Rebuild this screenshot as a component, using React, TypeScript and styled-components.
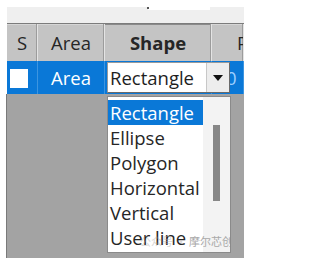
import React from "react";
import styled, { createGlobalStyle } from "styled-components";

const Global = createGlobalStyle`
  html, body { margin: 0; padding: 0; background: #ffffff; }
  body { font-family: "Open Sans", "Noto Sans", sans-serif; }
`;

const Frame = styled.div`
  width: 237px;
  margin-left: 7px;
  padding-top: 7px;
  display: flex;
  flex-direction: column;
`;

const TopBar = styled.div`
  height: 16px;
  background: #efefef;
  display: flex;
  align-items: flex-start;
  padding-left: 141px;
`;

const TopField = styled.div`
  position: relative;
  width: 62px;
  height: 3px;
  background: #ffffff;
  &::before {
    content: "";
    position: absolute;
    left: -1px;
    top: 0;
    width: 2px;
    height: 2px;
    background: #555;
  }
`;

const Grid = styled.div`
  display: grid;
  grid-template-columns: 31px 67px 107px 32px;
  grid-template-rows: 37px 33px;
  border-top: 1px solid #7c7c7c;
`;

const HeadCell = styled.div<{ $bold?: boolean; $pad?: number }>`
  background: #c4c4c4;
  border-right: 1px solid #e4e4e4;
  box-shadow: inset -1px 0 0 #9c9c9c, inset 0 1px 0 ${(p) => (p.$bold ? "#8a8a8a" : "#d6d6d6")};
  display: flex;
  align-items: center;
  justify-content: ${(p) => (p.$pad !== undefined ? "flex-start" : "center")};
  padding-left: ${(p) => p.$pad ?? 0}px;
  overflow: hidden;
  font-size: 18.5px;
  font-weight: ${(p) => (p.$bold ? 700 : 400)};
  color: #262626;
  white-space: nowrap;
`;

const RowCell = styled.div<{ $pad?: number }>`
  position: relative;
  background: #0a78d7;
  border-right: 1px solid #3d95e0;
  display: flex;
  align-items: center;
  justify-content: ${(p) => (p.$pad !== undefined ? "flex-start" : "center")};
  padding-left: ${(p) => p.$pad ?? 0}px;
  font-size: 18.5px;
  color: #ffffff;
  white-space: nowrap;
  overflow: visible;
`;

const ClipCell = styled(RowCell)`
  overflow: hidden;
  color: #9fd0ff;
`;

const CheckBox = styled.div`
  width: 18px;
  height: 19px;
  background: #ffffff;
  margin-top: 2px;
`;

const Combo = styled.div`
  position: absolute;
  left: 2px;
  top: 1px;
  width: 123px;
  height: 31px;
  box-sizing: border-box;
  border: 1px solid #6a6a6a;
  border-top-color: #9a9a9a;
  border-left-color: #9a9a9a;
  background: #ffffff;
  display: flex;
  z-index: 2;
`;

const ComboText = styled.div`
  flex: 1;
  display: flex;
  align-items: center;
  padding-left: 2px;
  font-size: 18.5px;
  color: #1e1e1e;
`;

const ComboButton = styled.div`
  width: 22px;
  background: #ededed;
  border-left: 1px solid #c8c8c8;
  display: flex;
  align-items: center;
  justify-content: center;
`;

const Triangle = styled.div`
  width: 0;
  height: 0;
  border-left: 5px solid transparent;
  border-right: 5px solid transparent;
  border-top: 6px solid #111;
`;

const ListBox = styled.div`
  position: absolute;
  left: 2px;
  top: 35px;
  width: 124px;
  height: 157px;
  box-sizing: border-box;
  border: 1px solid #8a8a8a;
  background: #ffffff;
  display: flex;
  overflow: hidden;
  z-index: 3;
`;

const Items = styled.div`
  width: 95px;
  padding-top: 3px;
  display: flex;
  flex-direction: column;
`;

const Item = styled.div<{ $sel?: boolean }>`
  height: 25px;
  line-height: 25px;
  padding-left: 2px;
  font-size: 18.5px;
  white-space: nowrap;
  color: ${(p) => (p.$sel ? "#ffffff" : "#262626")};
  background: ${(p) => (p.$sel ? "#0a78d7" : "transparent")};
`;

const Track = styled.div`
  flex: 1;
  background: #f3f3f3;
  padding: 28px 0 0 10px;
`;

const Thumb = styled.div`
  width: 7px;
  height: 76px;
  background: #878787;
`;

const Watermark = styled.div`
  position: absolute;
  right: -3px;
  bottom: 3px;
  font-family: "Noto Sans CJK SC", sans-serif;
  font-size: 11px;
  color: #a9a9a9;
  white-space: nowrap;
`;

const Faint = styled.span`
  opacity: 0.45;
`;

const Body = styled.div`
  height: 164px;
  background: #a3a3a3;
  border-left: 1px solid #7a7a7a;
  margin-left: -1px;
`;

const items = ["Rectangle", "Ellipse", "Polygon", "Horizontal", "Vertical", "User line"];

export default function App() {
  return (
    <>
      <Global />
      <Frame>
        <TopBar>
          <TopField />
        </TopBar>
        <Grid>
          <HeadCell>S</HeadCell>
          <HeadCell>Area</HeadCell>
          <HeadCell $bold>Shape</HeadCell>
          <HeadCell $pad={25}>P</HeadCell>

          <RowCell $pad={3}>
            <CheckBox />
          </RowCell>
          <RowCell>Area</RowCell>
          <RowCell>
            <Combo>
              <ComboText>Rectangle</ComboText>
              <ComboButton>
                <Triangle />
              </ComboButton>
            </Combo>
            <ListBox>
              <Items>
                {items.map((t, i) => (
                  <Item key={t} $sel={i === 0}>
                    {t}
                  </Item>
                ))}
              </Items>
              <Track>
                <Thumb />
              </Track>
              <Watermark>
                <Faint>公众号 · </Faint>摩尔芯创
              </Watermark>
            </ListBox>
          </RowCell>
          <ClipCell $pad={14}>0</ClipCell>
        </Grid>
        <Body />
      </Frame>
    </>
  );
}
